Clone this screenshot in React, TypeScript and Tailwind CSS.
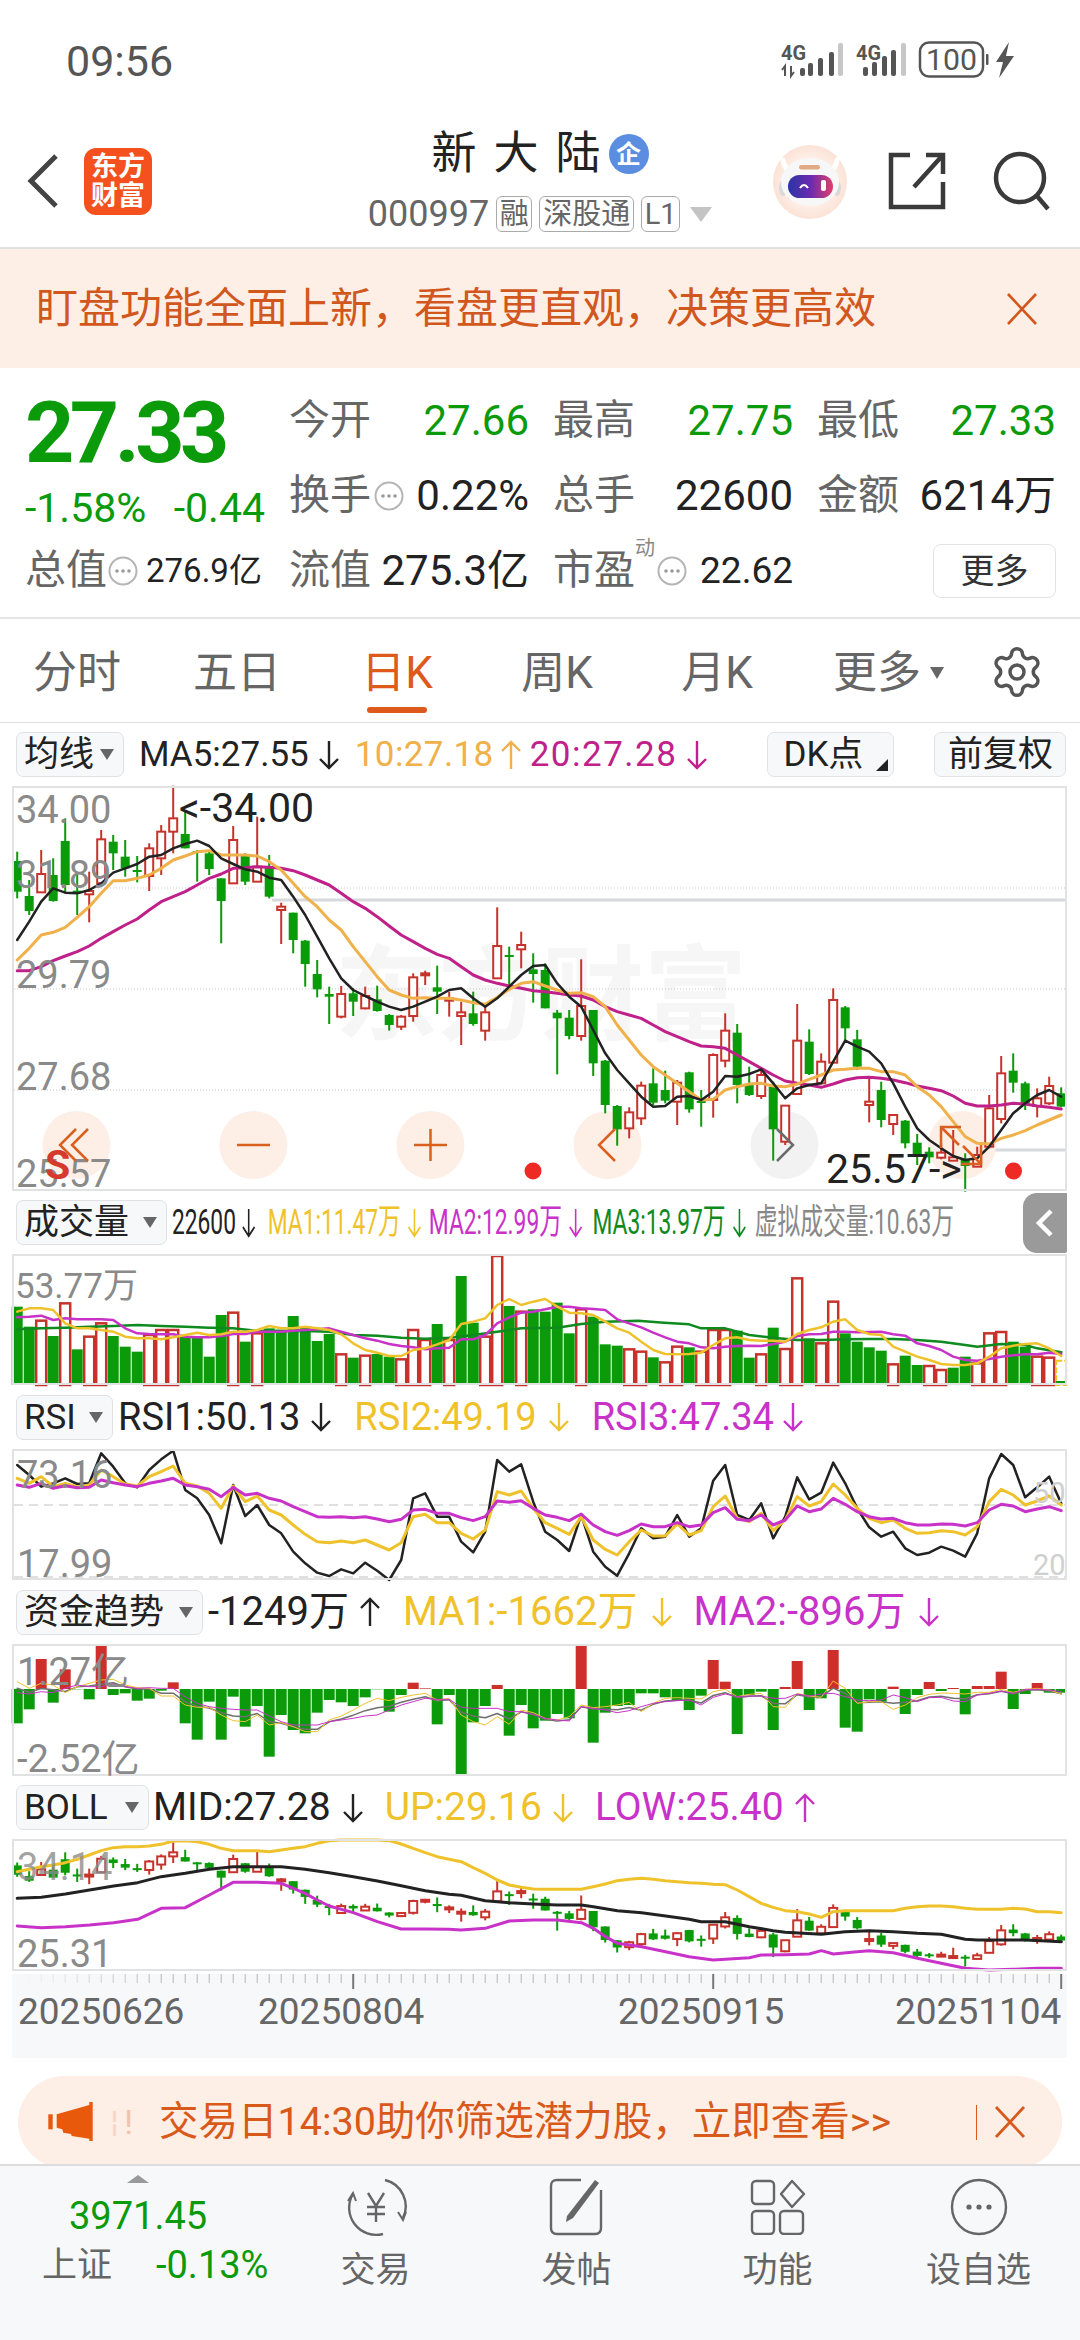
import React from "react";
import { Settings } from "lucide-react";

const GREEN = "#0a9a0a";
const RED = "#c8322c";
const G = 0;
const R = 1;

const cx = (i: number) => 5.2 + 12 * i;

// [colour, high, body top, body bottom, low], measured off the main chart
const candles: number[][] = [
    [G, 395, 423, 515, 535], [G, 480, 528, 573, 585], [R, 390, 462, 517, 517], [G, 415, 465, 543, 545],
    [G, 295, 363, 495, 520], [G, 455, 512, 520, 585], [R, 455, 513, 523, 607], [R, 330, 358, 490, 490],
    [G, 345, 365, 400, 450], [G, 360, 410, 445, 470], [G, 408, 450, 454, 487], [R, 370, 385, 468, 513],
    [R, 315, 335, 415, 465], [R, 197, 295, 335, 400], [G, 270, 342, 385, 385], [G, 390, 393, 397, 485],
    [G, 393, 400, 447, 465], [G, 475, 475, 543, 670], [R, 318, 360, 490, 490], [G, 400, 402, 485, 495],
    [R, 290, 440, 485, 485], [G, 405, 440, 530, 535], [R, 548, 560, 570, 672], [G, 578, 578, 660, 700],
    [G, 660, 662, 732, 800], [G, 720, 762, 808, 832], [G, 800, 822, 830, 912], [R, 798, 822, 890, 895],
    [G, 805, 820, 845, 888], [R, 800, 828, 865, 868], [G, 797, 838, 873, 875], [G, 882, 885, 915, 932],
    [R, 885, 890, 920, 930], [R, 760, 772, 888, 905], [R, 752, 760, 766, 795], [G, 737, 802, 815, 882],
    [R, 815, 835, 842, 890], [R, 845, 877, 888, 975], [G, 815, 880, 912, 917], [R, 850, 877, 932, 962],
    [R, 562, 678, 775, 775], [G, 680, 705, 710, 810], [R, 635, 675, 688, 745], [G, 700, 748, 762, 848],
    [G, 730, 750, 865, 865], [G, 870, 878, 895, 1063], [G, 870, 893, 948, 958], [R, 718, 858, 948, 962],
    [G, 870, 870, 1030, 1068], [G, 1020, 1022, 1155, 1180], [G, 1155, 1158, 1228, 1277], [R, 1162, 1177, 1225, 1255],
    [R, 1085, 1097, 1195, 1215], [G, 1045, 1090, 1148, 1155], [G, 1052, 1110, 1142, 1150], [R, 1080, 1088, 1145, 1215],
    [G, 1055, 1057, 1168, 1178], [G, 1110, 1143, 1148, 1220], [R, 1000, 1005, 1140, 1193], [R, 880, 932, 1022, 1042],
    [G, 912, 938, 1095, 1150], [G, 1040, 1092, 1125, 1128], [R, 1045, 1065, 1128, 1137], [G, 1085, 1100, 1228, 1322],
    [R, 1155, 1157, 1265, 1275], [R, 852, 962, 1122, 1125], [G, 928, 965, 1062, 1065], [R, 1000, 1025, 1090, 1092],
    [R, 805, 840, 1028, 1028], [G, 858, 862, 925, 965], [G, 930, 958, 1040, 1050], [R, 1072, 1145, 1155, 1207],
    [G, 1085, 1110, 1200, 1222], [R, 1185, 1185, 1212, 1245], [G, 1200, 1202, 1270, 1285], [G, 1242, 1268, 1310, 1335],
    [G, 1282, 1295, 1312, 1330], [R, 1270, 1298, 1313, 1318], [R, 1230, 1312, 1322, 1322], [G, 1300, 1318, 1338, 1415],
    [R, 1280, 1305, 1340, 1340], [R, 1125, 1165, 1280, 1285], [R, 1008, 1060, 1197, 1210], [G, 1000, 1052, 1088, 1118],
    [G, 1085, 1090, 1150, 1170], [R, 1105, 1135, 1158, 1192], [R, 1070, 1098, 1150, 1155], [G, 1102, 1120, 1160, 1162],
];

const ma5 = [660, 605, 545, 505, 518, 520, 510, 490, 458, 445, 432, 410, 405, 385, 372, 362, 378, 415, 432, 448, 455, 473, 480, 530, 585, 650, 715, 775, 810, 828, 845, 860, 870, 860, 845, 830, 810, 805, 835, 860, 835, 800, 765, 738,
    735, 790, 830, 860, 930, 1000, 1050, 1090, 1130, 1160, 1158, 1130, 1128, 1140, 1115, 1068, 1070, 1062, 1048, 1090, 1135, 1105, 1095, 1090, 1025, 962, 980, 995, 1030, 1090, 1160, 1225, 1260, 1285, 1308, 1320, 1315, 1280, 1230, 1180, 1150, 1125, 1110, 1130];
const ma10 = [720, 685, 645, 637, 622, 592, 560, 520, 482, 482, 475, 465, 445, 420, 408, 395, 392, 405, 405, 405, 408, 425, 450, 490, 530, 560, 600, 630, 680, 725, 770, 810, 825, 835, 833, 835, 835, 840, 848, 853, 832, 808, 790, 785,
    798, 810, 820, 818, 830, 860, 915, 960, 1005, 1040, 1065, 1090, 1115, 1140, 1138, 1110, 1100, 1092, 1090, 1098, 1100, 1092, 1078, 1065, 1050, 1048, 1045, 1045, 1055, 1055, 1065, 1100, 1125, 1160, 1205, 1250, 1270, 1272, 1255, 1245, 1232, 1215, 1200, 1185];
const ma20 = [752, 752, 740, 722, 708, 695, 678, 655, 635, 615, 597, 570, 545, 530, 515, 495, 475, 462, 445, 443, 440, 442, 445, 452, 465, 480, 495, 520, 545, 565, 590, 618, 645, 665, 685, 703, 715, 740, 765, 780, 790, 798, 805, 812,
    815, 820, 825, 828, 840, 860, 875, 885, 895, 915, 935, 950, 965, 978, 980, 985, 1005, 1025, 1045, 1065, 1083, 1090, 1095, 1102, 1092, 1080, 1073, 1072, 1075, 1080, 1088, 1098, 1105, 1112, 1128, 1150, 1158, 1158, 1155, 1150, 1152, 1158, 1162, 1167];

// negative means a red (hollow) bar
const volume = [320, 380, -362, 408, -310, 448, -410, -370, 408, 440, 455, -405, -390, -390, 410, 410, 470, 345, -338, 425, -400, 385, 395, 348, 380, 423, 402, -463, 473, -467, 462, 470, -478, -390, -420, 372, -420, 228, 368, -410, -168, 318, -335, 328,
    335, 308, 400, -328, 350, 433, 437, -448, -455, 472, -487, -440, 442, -455, -390, -390, 392, 473, -463, 383, -447, -235, 415, -430, -305, 400, 425, 442, 452, -493, 467, 495, -498, -510, 503, 470, -490, -400, -396, 425, 440, -470, -473, 543];
const volMa1 = [335, 325, 325, 330, 370, 385, 385, 390, 395, 410, 415, 415, 418, 412, 405, 398, 405, 403, 395, 395, 390, 378, 385, 385, 380, 385, 390, 403, 430, 450, 458, 468, 468, 450, 445, 433, 420, 372, 365, 355, 315, 297, 315, 305,
    297, 320, 338, 340, 345, 365, 385, 398, 425, 450, 462, 463, 462, 458, 435, 415, 412, 420, 422, 422, 425, 402, 390, 382, 365, 358, 390, 402, 405, 440, 455, 470, 480, 492, 495, 495, 490, 470, 445, 437, 432, 430, 445, 468];
const volMa2 = [352, 350, 347, 360, 355, 358, 358, 358, 360, 385, 400, 402, 403, 403, 410, 412, 412, 408, 402, 402, 395, 395, 395, 392, 390, 388, 385, 395, 405, 415, 422, 432, 438, 442, 448, 445, 443, 418, 418, 405, 370, 352, 338, 335,
    328, 320, 320, 325, 327, 330, 358, 370, 382, 398, 412, 425, 430, 442, 445, 440, 438, 437, 438, 432, 425, 408, 403, 402, 395, 395, 397, 396, 395, 403, 407, 430, 438, 450, 470, 480, 482, 477, 470, 466, 463, 463, 458, 462];
const volMa3L = [50, 388, 120, 385, 190, 383, 260, 380, 330, 378, 400, 375, 468, 378, 538, 380, 608, 383, 677, 385, 747, 393, 817, 392, 886, 393, 956, 395, 1026, 405, 1096, 407, 1165, 413, 1235, 416, 1304, 413, 1374, 405, 1444, 395, 1514, 385];
const volMa3R = [50, 383, 120, 372, 190, 365, 285, 362, 360, 368, 433, 373, 468, 385, 538, 385, 608, 405, 677, 413, 747, 420, 817, 420, 886, 418, 956, 417, 1026, 417, 1096, 420, 1165, 425, 1235, 435, 1270, 440, 1339, 432, 1409, 435, 1444, 445, 1514, 457];

const rsi1 = [795, 825, 860, 850, 835, 852, 850, 760, 800, 850, 862, 810, 778, 752, 870, 895, 945, 1030, 855, 948, 915, 975, 1000, 1055, 1090, 1118, 1128, 1108, 1120, 1088, 1112, 1140, 1080, 895, 880, 950, 950, 1025, 1057, 995, 780, 815, 793, 905,
    995, 1020, 1053, 945, 1055, 1100, 1127, 1060, 985, 1015, 1010, 945, 1010, 985, 842, 795, 945, 960, 910, 1015, 950, 832, 898, 878, 788, 850, 925, 982, 1010, 995, 1045, 1065, 1058, 1040, 1052, 1070, 1000, 835, 762, 795, 892, 862, 830, 910];
const rsi2 = [835, 850, 830, 860, 850, 860, 855, 810, 830, 852, 858, 830, 815, 798, 850, 858, 880, 925, 858, 905, 888, 930, 945, 975, 1003, 1025, 1028, 1023, 1028, 1020, 1035, 1050, 1028, 950, 943, 968, 968, 1000, 1017, 990, 875, 885, 873, 925,
    968, 985, 1003, 950, 1020, 1048, 1065, 1025, 990, 1008, 1008, 972, 1005, 992, 920, 888, 955, 965, 940, 992, 960, 890, 918, 905, 852, 885, 925, 955, 968, 960, 985, 1000, 998, 992, 995, 1005, 980, 905, 868, 885, 915, 903, 888, 915];
const rsi3 = [855, 862, 850, 865, 857, 863, 862, 840, 848, 855, 860, 850, 843, 835, 855, 860, 868, 890, 862, 885, 880, 895, 903, 920, 935, 950, 952, 950, 953, 950, 957, 965, 958, 930, 928, 940, 940, 953, 962, 950, 903, 907, 902, 925,
    945, 952, 962, 942, 975, 995, 1006, 992, 972, 980, 980, 968, 980, 975, 938, 923, 958, 962, 945, 975, 960, 918, 935, 927, 895, 913, 935, 950, 957, 955, 968, 975, 975, 972, 973, 978, 968, 930, 913, 918, 935, 927, 920, 932];

// negative means a red bar above the zero line
const flow = [400, 358, -207, 338, -238, 298, 328, -165, 315, 310, 332, 326, 302, -277, 400, 449, 335, 449, 320, 410, 348, 500, 375, 420, 430, 368, 330, 337, 348, 322, 298, 365, 315, -278, -295, 403, 315, 558, 397, 348, -285, 437, 345, 415,
    392, 372, 385, -168, 458, 368, 348, 345, 310, 310, 322, 332, 360, 317, -210, -275, 432, 315, 305, 420, -291, -213, 360, 325, -180, 413, 425, 328, 335, -290, 372, 315, -276, 303, -294, 373, -288, -288, -245, 357, 312, -279, 308, 308];
const flowMa1 = [275, 295, 280, 285, 308, 290, 280, 270, 268, 285, 293, 295, 318, 318, 345, 352, 352, 375, 392, 395, 375, 405, 398, 410, 425, 425, 390, 378, 360, 340, 325, 332, 322, 315, 310, 330, 325, 375, 395, 405, 380, 403, 360, 368,
    385, 390, 380, 345, 353, 350, 345, 337, 365, 340, 325, 323, 325, 327, 305, 298, 320, 313, 310, 350, 352, 310, 318, 322, 273, 295, 340, 335, 335, 358, 345, 323, 313, 309, 310, 312, 307, 307, 298, 307, 298, 295, 300, 312];
const flowMa2 = [308, 312, 305, 308, 295, 285, 290, 290, 282, 290, 295, 293, 295, 295, 320, 340, 350, 355, 358, 360, 360, 378, 395, 405, 405, 405, 395, 390, 385, 378, 375, 360, 345, 335, 325, 328, 328, 352, 355, 355, 355, 365, 365, 373,
    385, 390, 393, 350, 355, 360, 368, 362, 350, 340, 335, 332, 330, 345, 322, 312, 320, 318, 318, 325, 325, 312, 318, 312, 310, 320, 330, 332, 330, 315, 323, 335, 323, 322, 333, 335, 315, 310, 303, 310, 298, 298, 300, 305];
const flowMid = flowMa1.map((y, i) => (y + flowMa2[i]) / 2 + 3);

const bollUp = [845, 838, 830, 825, 818, 808, 795, 782, 773, 770, 770, 768, 763, 753, 752, 755, 763, 775, 782, 782, 782, 785, 780, 775, 770, 760, 752, 750, 750, 750, 750, 752, 762, 775, 788, 800, 808, 815, 833, 850, 870, 885, 892, 897,
    898, 898, 898, 898, 890, 882, 872, 868, 865, 868, 872, 875, 878, 880, 883, 884, 900, 920, 940, 952, 962, 965, 972, 982, 965, 962, 962, 962, 962, 962, 955, 950, 948, 948, 950, 955, 958, 958, 958, 955, 957, 965, 965, 968];
const bollMidL = [50, 925, 120, 922, 190, 912, 260, 900, 330, 888, 400, 878, 468, 860, 538, 850, 608, 838, 677, 830, 747, 830, 817, 830, 886, 838, 956, 848, 1026, 860, 1096, 873, 1165, 887, 1235, 902, 1304, 913, 1339, 916, 1409, 932, 1479, 938, 1549, 942];
const bollMidR = [50, 945, 120, 945, 155, 950, 225, 962, 295, 968, 365, 978, 433, 988, 468, 995, 538, 995, 608, 1010, 677, 1022, 712, 1027, 817, 1033, 886, 1025, 956, 1022, 1026, 1025, 1096, 1030, 1165, 1033, 1235, 1048, 1270, 1050, 1339, 1050, 1409, 1050, 1514, 1055];
const bollLowL = [50, 1008, 120, 1013, 190, 1010, 260, 1005, 330, 998, 400, 988, 468, 955, 538, 953, 608, 915, 677, 877, 747, 877, 817, 880, 852, 895, 886, 910, 921, 930, 956, 948, 1026, 968, 1096, 995, 1165, 1017, 1235, 1017, 1304, 1018, 1339, 1020, 1409, 1015, 1479, 993, 1549, 990];
const bollLowR = [50, 990, 120, 998, 155, 1015, 190, 1040, 225, 1060, 295, 1070, 365, 1085, 433, 1100, 503, 1110, 538, 1108, 608, 1103, 642, 1095, 712, 1094, 782, 1092, 817, 1082, 852, 1092, 921, 1085, 956, 1082, 1026, 1088, 1096, 1105, 1165, 1120, 1235, 1135, 1304, 1140, 1374, 1138, 1444, 1135, 1514, 1135];

const dense = (ys: number[], off: number) => ys.map((y, i) => `${cx(i)},${y / 3 - off}`).join(" ");
const sparse = (left: number[], right: number[], off: number) => {
    const out: string[] = [];
    for (let i = 0; i < left.length; i += 2) out.push(`${left[i] / 2.904 - 12},${left[i + 1] / 3 - off}`);
    for (let i = 0; i < right.length; i += 2) out.push(`${528 + right[i] / 2.904},${right[i + 1] / 3 - off}`);
    return out.join(" ");
};

const Line: React.FC<{ points: string; color: string; width?: number }> = ({ points, color, width = 2 }) => (
    <polyline points={points} fill="none" stroke={color} strokeWidth={width} strokeLinejoin="round" strokeLinecap="round" />
);

const Frame: React.FC<{ h: number }> = ({ h }) => (
    <rect x="1" y="1" width="1053" height={h - 2} fill="none" stroke="#e1e2e4" strokeWidth="2" />
);

const AxisText: React.FC<{ x?: number; y: number; size?: number; children: React.ReactNode; color?: string }> = ({ x = 4, y, size = 38, children, color = "#8a8a8a" }) => (
    <text x={x} y={y} fontSize={size} fill={color}>{children}</text>
);

const Candles: React.FC<{ map: (z: number) => number; w: number; sw: number; minH?: number }> = ({ map, w, sw, minH = 2 }) => (
    <>
        {candles.map((c, i) => {
            const x = cx(i);
            const color = c[0] === R ? RED : GREEN;
            const top = map(c[2]);
            const h = Math.max(map(c[3]) - top, minH);
            return (
                <g key={i}>
                    <line x1={x} x2={x} y1={map(c[1])} y2={map(c[4])} stroke={color} strokeWidth={sw} />
                    {c[0] === R
                        ? <rect x={x - w / 2} y={top} width={w} height={h} fill="#fff" stroke={color} strokeWidth={sw} />
                        : <rect x={x - w / 2 - 0.5} y={top} width={w + 1} height={h} fill={color} />}
                </g>
            );
        })}
    </>
);

const MainChart: React.FC = () => {
    const y = (z: number) => z / 3 - 66;
    const circles = [64.4, 241.4, 418.4, 595.5, 772.5, 950];
    return (
        <div className="h-[405px] w-[1055px] ml-[12px] shrink-0">
            <svg width="1055" height="405" className="block overflow-visible">
                <text x="323" y="246" fontSize="103" fontWeight="700" fill="#f6f6f6">东方财富</text>
                {[102, 203, 304].map((g) => (
                    <line key={g} x1="2" x2="1053" y1={g} y2={g} stroke="#c9c9c9" strokeWidth="1" strokeDasharray="1 2" />
                ))}
                <line x1="260" x2="1054" y1="114" y2="114" stroke="#d7d9dc" strokeWidth="3" />
                <line x1="982" x2="1054" y1="364" y2="364" stroke="#d7d9dc" strokeWidth="3" />
                {circles.map((c, i) => (
                    <circle key={c} cx={c} cy="359" r="34" fill={i === 4 ? "#f2f2f2" : "#fdeee6"} />
                ))}
                <Candles map={y} w={8} sw={2} />
                <Line points={dense(ma20, 66)} color="#c0208a" width={3} />
                <Line points={dense(ma10, 66)} color="#f0b04a" width={3} />
                <Line points={dense(ma5, 66)} color="#222222" width={2.5} />
                <Frame h={405} />
                <AxisText y={37}>34.00</AxisText>
                <AxisText y={102}>31.89</AxisText>
                <AxisText y={202}>29.79</AxisText>
                <AxisText y={304}>27.68</AxisText>
                <AxisText y={401}>25.57</AxisText>
                <text x="167" y="36" fontSize="41" fill="#222">&lt;-34.00</text>
                <text x="814" y="397" fontSize="41" fill="#222">25.57-&gt;</text>
                <text x="33" y="393" fontSize="41" fontWeight="700" fill="#d43b2c">S</text>
                <g fill="none" stroke="#d9601f" strokeWidth="2.5">
                    <path d="M75 343 L59 359 L75 375 M87 343 L71 359 L87 375" transform="translate(-11 0)" />
                    <path d="M225 359 H258" />
                    <path d="M402 359 H435 M418.5 343 V375" />
                    <path d="M603 343 L587 359 L603 375" />
                    <path d="M930 362 V341 H950 M930 341 L948 359 M970 359 V378 H950 M970 378 L952 360" transform="translate(-1 0)" />
                </g>
                <path d="M765 343 L781 359 L765 375" fill="none" stroke="#6b6b6b" strokeWidth="2.5" />
                <circle cx="521" cy="385" r="8.5" fill="#ee2a24" />
                <circle cx="1001.5" cy="385" r="8.5" fill="#ee2a24" />
            </svg>
        </div>
    );
};

const VolumeChart: React.FC = () => {
    const y = (z: number) => z / 3 - 54;
    return (
        <div className="h-[131px] w-[1055px] ml-[12px] shrink-0">
            <svg width="1055" height="131" className="block overflow-visible">
                {volume.map((v, i) => {
                    const x = cx(i);
                    const top = y(Math.abs(v));
                    if (i === 87) {
                        return (
                            <g key={i}>
                                <rect x={x - 5} y={y(482)} width={10} height={131 - y(482)} fill="#fff" stroke="#efc22c" strokeWidth="2" strokeDasharray="6 2" />
                                <rect x={x - 5.5} y={top} width={11} height={131 - top} fill={GREEN} />
                            </g>
                        );
                    }
                    return v < 0
                        ? <rect key={i} x={x - 5} y={top} width={10} height={131 - top} fill="#fff" stroke={RED} strokeWidth="2.5" />
                        : <rect key={i} x={x - 5.5} y={top} width={11} height={131 - top} fill={GREEN} />;
                })}
                <Line points={sparse(volMa3L, volMa3R, 54)} color="#0f8a1e" width={2.5} />
                <Line points={dense(volMa2, 54)} color="#c832c8" width={2.5} />
                <Line points={dense(volMa1, 54)} color="#efc22c" width={2.5} />
                <Frame h={131} />
                <AxisText x={3} y={44} size={35}>53.77万</AxisText>
            </svg>
        </div>
    );
};

const RsiChart: React.FC = () => (
    <div className="h-[131px] w-[1055px] ml-[12px] shrink-0">
        <svg width="1055" height="131" className="block overflow-visible">
            {[56, 128].map((g) => (
                <line key={g} x1="2" x2="1053" y1={g} y2={g} stroke="#d6d6d6" strokeWidth="1.5" strokeDasharray="9 6" />
            ))}
            <Line points={dense(rsi1, 249)} color="#222222" width={2.5} />
            <Line points={dense(rsi2, 249)} color="#efc22c" width={3} />
            <Line points={dense(rsi3, 249)} color="#c832c8" width={3} />
            <Frame h={131} />
            <AxisText x={5} y={39}>73.16</AxisText>
            <AxisText x={5} y={128}>17.99</AxisText>
            <AxisText x={1021} y={54} size={29} color="#cfcfcf">50</AxisText>
            <AxisText x={1021} y={126} size={29} color="#cfcfcf">20</AxisText>
        </svg>
    </div>
);

const FlowChart: React.FC = () => {
    const y = (z: number) => z / 3 - 54;
    const zero = y(297);
    return (
        <div className="h-[132px] w-[1055px] ml-[12px] shrink-0">
            <svg width="1055" height="132" className="block overflow-visible">
                {flow.map((v, i) => {
                    const x = cx(i) - 5.5;
                    const end = y(Math.abs(v));
                    return v < 0
                        ? <rect key={i} x={x} y={end} width={11} height={zero - end} fill="#cf2f2b" />
                        : <rect key={i} x={x} y={zero} width={11} height={end - zero} fill={GREEN} />;
                })}
                <Line points={dense(flowMid, 54)} color="#6f6f6f" width={1.5} />
                <Line points={dense(flowMa1, 54)} color="#efc22c" width={1} />
                <Line points={dense(flowMa2, 54)} color="#c832c8" width={1} />
                <Frame h={132} />
                <AxisText x={5} y={41}>1.27亿</AxisText>
                <AxisText x={5} y={128}>-2.52亿</AxisText>
            </svg>
        </div>
    );
};

const BollChart: React.FC = () => {
    const y = (z: number) => (757 + 0.306 * (z - 197)) / 3 - 249;
    return (
        <div className="h-[132px] w-[1055px] ml-[12px] shrink-0">
            <svg width="1055" height="132" className="block overflow-visible">
                <Candles map={y} w={8} sw={2} minH={2} />
                <Line points={dense(bollUp, 249)} color="#efc22c" width={3} />
                <Line points={sparse(bollMidL, bollMidR, 249)} color="#222222" width={3} />
                <Line points={sparse(bollLowL, bollLowR, 249)} color="#c832c8" width={3} />
                <Frame h={132} />
                <AxisText x={5} y={41} color="#8a8a8acc">34.14</AxisText>
                <AxisText x={5} y={128}>25.31</AxisText>
            </svg>
        </div>
    );
};

const TimeAxis: React.FC = () => (
    <div className="mt-[3px] h-[84px] w-[1055px] ml-[12px] shrink-0 bg-[#f7f8fa] flex flex-col">
        <svg width="1055" height="15" className="block shrink-0">
            {candles.map((_, i) => {
                const major = i === 28 || i === 58 || i === 87;
                return (
                    <line key={i} x1={cx(i)} x2={cx(i)} y1="0" y2={major ? 15 : 9} stroke={major ? "#777" : "#b5b5b5"} strokeWidth={major ? 2 : 1} opacity={i < 14 ? 0.08 * i : 1} />
                );
            })}
        </svg>
        <div className="relative h-[40px] mt-[3px] text-[37px] leading-[40px] text-[#666]">
            <span className="absolute left-[6px]">20250626</span>
            <span className="absolute left-[246px]">20250804</span>
            <span className="absolute left-[606px]">20250915</span>
            <span className="absolute left-[883px]">20251104</span>
        </div>
    </div>
);

const Arrow: React.FC<{ up?: boolean; className?: string }> = ({ up, className }) => (
    <svg width="22" height="30" viewBox="0 0 22 30" className={`shrink-0 ${className ?? ""}`} fill="none" stroke="currentColor" strokeWidth="2.4">
        {up
            ? <path d="M11 29 V2 M2 11 L11 2 L20 11" />
            : <path d="M11 1 V28 M2 19 L11 28 L20 19" />}
    </svg>
);

const Tri: React.FC = () => (
    <span className="w-0 h-0 border-x-[7px] border-x-transparent border-t-[11px] border-t-[#666] shrink-0" />
);

const Selector: React.FC<{ label: string; className: string }> = ({ label, className }) => (
    <div className={`h-[45px] ml-[16px] shrink-0 flex items-center justify-between pl-[7px] pr-[9px] rounded-[7px] border border-[#dfe1e4] bg-[#f7f8fa] text-[35px] leading-none text-[#222] ${className}`}>
        <span>{label}</span>
        <Tri />
    </div>
);

const Tag: React.FC<{ children: React.ReactNode; className?: string }> = ({ children, className }) => (
    <span className={`h-[36px] flex items-center justify-center rounded-[6px] border border-[#aaa] text-[29px] leading-none text-[#666] ${className ?? ""}`}>{children}</span>
);

const Dots: React.FC<{ className?: string }> = ({ className }) => (
    <svg width="30" height="30" viewBox="0 0 30 30" className={`shrink-0 ${className ?? ""}`}>
        <circle cx="15" cy="15" r="13.5" fill="none" stroke="#b5b5b5" strokeWidth="2" />
        <circle cx="9" cy="15" r="1.8" fill="#999" />
        <circle cx="15" cy="15" r="1.8" fill="#999" />
        <circle cx="21" cy="15" r="1.8" fill="#999" />
    </svg>
);

const StatusIcons: React.FC = () => (
    <svg width="240" height="40" viewBox="0 0 240 40" className="block">
        <g fill="#555">
            <text x="3" y="20" fontSize="21" fontWeight="700" textLength="25" lengthAdjust="spacingAndGlyphs">4G</text>
            <path d="M7 36 V26 L4 30 M13 26 V36 L16 32" stroke="#555" strokeWidth="2" fill="none" />
            <rect x="22" y="28" width="5" height="8" rx="2" />
            <rect x="30" y="23" width="5" height="13" rx="2" />
            <rect x="40" y="18" width="5" height="18" rx="2" />
            <rect x="51" y="12" width="5" height="24" rx="2" />
            <rect x="60" y="3" width="5" height="33" rx="2" fill="#c7c7c7" />
            <text x="78" y="20" fontSize="21" fontWeight="700" textLength="25" lengthAdjust="spacingAndGlyphs">4G</text>
            <rect x="85" y="27" width="5" height="9" rx="2" />
            <rect x="94" y="22" width="5" height="14" rx="2" />
            <rect x="104" y="16" width="5" height="20" rx="2" />
            <rect x="113" y="10" width="5" height="26" rx="2" />
            <rect x="123" y="3" width="5" height="33" rx="2" fill="#c7c7c7" />
        </g>
        <rect x="142" y="2.5" width="63" height="34" rx="9" fill="none" stroke="#555" strokeWidth="2.5" />
        <text x="148" y="30" fontSize="29" fill="#555" textLength="51" lengthAdjust="spacingAndGlyphs">100</text>
        <rect x="208" y="14" width="2.5" height="11" rx="1" fill="#555" />
        <path d="M231 2 L218 22 H225 L221 38 L236 16 H228 Z" fill="#555" />
    </svg>
);

const RobotAvatar: React.FC = () => (
    <svg width="76" height="76" viewBox="0 0 76 76" className="block">
        <defs>
            <linearGradient id="visor" x1="0" x2="1" y1="0" y2="0">
                <stop offset="0" stopColor="#2a35a5" />
                <stop offset="0.5" stopColor="#6a2bb0" />
                <stop offset="1" stopColor="#e0406a" />
            </linearGradient>
            <radialGradient id="halo">
                <stop offset="0.5" stopColor="#fff4ee" />
                <stop offset="1" stopColor="#fbe2d6" />
            </radialGradient>
        </defs>
        <circle cx="38" cy="38" r="37" fill="url(#halo)" />
        <path d="M11 16 Q12 26 21 27 M65 16 Q64 26 55 27" stroke="#fff" strokeWidth="5" fill="none" strokeLinecap="round" />
        <ellipse cx="11" cy="44" rx="4" ry="8" fill="#d9d9dc" />
        <ellipse cx="65" cy="44" rx="4" ry="8" fill="#d9d9dc" />
        <ellipse cx="38" cy="38" rx="29" ry="24" fill="#f7f7f8" />
        <rect x="27" y="21" width="21" height="4.5" rx="2.2" fill="#e2a987" />
        <rect x="16" y="31" width="45" height="23" rx="11.5" fill="url(#visor)" />
        <path d="M28 44 Q32 38 36 44" stroke="#fff" strokeWidth="2" fill="none" />
        <rect x="49" y="36" width="5" height="11" rx="2" fill="#fff" />
    </svg>
);

const Stat: React.FC<{ label: string; value: string; dots?: boolean; className?: string }> = ({ label, value, dots, className }) => (
    <div className={`flex items-center justify-between whitespace-nowrap ${className ?? ""}`}>
        <div className="flex items-center">
            <span className="text-[41px] leading-none text-[#666]">{label}</span>
            {dots && <Dots className="ml-[3px]" />}
        </div>
        <span className="text-[42px] leading-none text-[#222]">{value}</span>
    </div>
);

const Quote: React.FC = () => (
    <div className="h-[251px] shrink-0 flex pt-[15px] border-b-2 border-[#e4e4e4]">
        <div className="w-[289px] shrink-0 pl-[25px] flex flex-col">
            <div className="h-[100px] flex items-center text-[86px] font-bold leading-none tracking-[-4.5px] text-[#0a9a0a]">27.33</div>
            <div className="h-[50px] flex items-center justify-between pr-[24px] text-[41px] leading-none text-[#0a9a0a]">
                <span>-1.58%</span>
                <span>-0.44</span>
            </div>
            <div className="h-[75px] flex items-center pr-[24px] whitespace-nowrap">
                <span className="text-[41px] leading-none text-[#666]">总值</span>
                <Dots className="ml-[1px]" />
                <span className="ml-[8px] text-[33px] leading-none text-[#222]">276.9亿</span>
            </div>
        </div>
        <div className="grid grid-cols-[264px_264px_239px] grid-rows-[75px_75px_75px]">
            <div className="flex items-center justify-between pr-[24px] whitespace-nowrap">
                <span className="text-[41px] leading-none text-[#666]">今开</span>
                <span className="text-[42px] leading-none text-[#0a9a0a]">27.66</span>
            </div>
            <div className="flex items-center justify-between pr-[24px] whitespace-nowrap">
                <span className="text-[41px] leading-none text-[#666]">最高</span>
                <span className="text-[42px] leading-none text-[#0a9a0a]">27.75</span>
            </div>
            <div className="flex items-center justify-between whitespace-nowrap">
                <span className="text-[41px] leading-none text-[#666]">最低</span>
                <span className="text-[42px] leading-none text-[#0a9a0a]">27.33</span>
            </div>
            <Stat label="换手" value="0.22%" dots className="pr-[24px]" />
            <Stat label="总手" value="22600" className="pr-[24px]" />
            <Stat label="金额" value="6214万" />
            <Stat label="流值" value="275.3亿" className="pr-[24px]" />
            <div className="flex items-center pr-[24px] whitespace-nowrap">
                <span className="text-[41px] leading-none text-[#666] shrink-0">市盈</span>
                <span className="self-start mt-[5px] text-[20px] leading-none text-[#888] shrink-0">动</span>
                <Dots className="ml-[2px]" />
                <span className="ml-auto text-[37px] leading-none text-[#222]">22.62</span>
            </div>
            <div className="flex items-center justify-end">
                <div className="w-[123px] h-[54px] flex items-center justify-center rounded-[8px] border border-[#e3e3e3] text-[34px] leading-none text-[#333]">更多</div>
            </div>
        </div>
    </div>
);

const Tabs: React.FC = () => (
    <div className="h-[104px] shrink-0 flex items-start pt-[32px] border-b border-[#dedede]">
        <div className="flex -ml-[3px]">
            {["分时", "五日", "日K", "周K", "月K"].map((t) => (
                <div key={t} className="w-[160px] flex flex-col items-center">
                    <span className={t === "日K" ? "text-[44px] leading-none text-[#dd5a1c]" : "text-[44px] leading-none text-[#666]"}>{t}</span>
                    <span className={t === "日K" ? "mt-[12px] w-[60px] h-[6px] rounded-full bg-[#dd5a1c]" : "mt-[12px] h-[6px]"} />
                </div>
            ))}
        </div>
        <div className="w-[160px] pl-[36px] flex items-center">
            <span className="text-[44px] leading-none text-[#666]">更多</span>
            <span className="ml-[9px] w-0 h-0 border-x-[7px] border-x-transparent border-t-[12px] border-t-[#666]" />
        </div>
        <Settings className="ml-[32px] -mt-[7px] text-[#555]" size={56} strokeWidth={1.5} />
    </div>
);

const NavItem: React.FC<{ label: string; children: React.ReactNode }> = ({ label, children }) => (
    <div className="w-[201px] flex flex-col items-center pt-[11px]">
        <div className="h-[60px] flex items-center justify-center">{children}</div>
        <span className="mt-[16px] text-[35px] leading-none text-[#666]">{label}</span>
    </div>
);

const Footer: React.FC = () => (
    <div className="flex-1 flex bg-[#f7f8fa] border-t-2 border-[#dcdcdc]">
        <div className="w-[275px] shrink-0 flex flex-col pl-[42px] pt-[9px]">
            <span className="ml-[85px] w-0 h-0 border-x-[11px] border-x-transparent border-b-[8px] border-b-[#999]" />
            <span className="ml-[27px] mt-[14px] text-[38px] leading-none text-[#0a9a0a]">3971.45</span>
            <div className="mt-[11px] flex items-center">
                <span className="text-[35px] leading-none text-[#666]">上证</span>
                <span className="ml-[44px] text-[38px] leading-none text-[#0a9a0a]">-0.13%</span>
            </div>
        </div>
        <NavItem label="交易">
            <svg width="66" height="60" viewBox="0 0 66 60" fill="none" stroke="#666" strokeWidth="2.4">
                <path d="M42 3 A27 27 0 0 1 60 41 M40 57 A27 27 0 0 1 10 17" />
                <path d="M5 24 L10 16 L13 24 M55 35 L60 43 L63 35" strokeWidth="2" />
                <path d="M25 16 L33 29 L41 16 M33 29 V45 M24 30 H42 M24 37 H42" />
            </svg>
        </NavItem>
        <NavItem label="发帖">
            <svg width="56" height="58" viewBox="0 0 56 58" fill="none" stroke="#666" strokeWidth="2.4">
                <path d="M32 2 H8 Q2 2 2 8 V50 Q2 56 8 56 H46 Q52 56 52 50 V12" />
                <path d="M18 38 L46 2 L50 5 L24 40 L17 44 Z" fill="#666" stroke="none" />
            </svg>
        </NavItem>
        <NavItem label="功能">
            <svg width="56" height="56" viewBox="0 0 56 56" fill="none" stroke="#666" strokeWidth="2.4">
                <rect x="2" y="2" width="22" height="23" rx="4" />
                <path d="M42 2 L54 15 L42 28 L31 15 Z" strokeLinejoin="round" />
                <rect x="2" y="32" width="22" height="23" rx="4" />
                <rect x="30" y="32" width="23" height="23" rx="4" />
            </svg>
        </NavItem>
        <NavItem label="设自选">
            <svg width="58" height="58" viewBox="0 0 58 58" fill="none" stroke="#666" strokeWidth="2.4">
                <circle cx="29" cy="29" r="27" />
                <circle cx="19" cy="29" r="2.6" fill="#666" stroke="none" />
                <circle cx="29" cy="29" r="2.6" fill="#666" stroke="none" />
                <circle cx="39" cy="29" r="2.6" fill="#666" stroke="none" />
            </svg>
        </NavItem>
    </div>
);

const App: React.FC = () => {
    return (
        <div className="w-[1080px] h-[2340px] flex flex-col overflow-hidden bg-white font-['Roboto','Noto_Sans_CJK_SC',sans-serif]">
            {/* status bar */}
            <div className="h-[100px] shrink-0 flex items-start">
                <span className="ml-[66px] mt-[36px] text-[43px] leading-[50px] text-[#555]">09:56</span>
                <div className="ml-auto mr-[62px] mt-[40px]"><StatusIcons /></div>
            </div>

            {/* stock header */}
            <div className="h-[149px] shrink-0 flex items-start border-b-2 border-[#e3e0e0]">
                <svg width="36" height="56" viewBox="0 0 36 56" className="ml-[25px] mt-[53px] shrink-0" fill="none" stroke="#444" strokeWidth="5">
                    <path d="M31 3 L6 28 L31 53" />
                </svg>
                <div className="ml-[23px] mt-[48px] w-[68px] h-[67px] shrink-0 rounded-[12px] bg-[#f4511e] flex flex-col items-center justify-center text-[27px] font-bold leading-[29px] text-white">
                    <span>东方</span>
                    <span>财富</span>
                </div>
                <div className="w-[610px] ml-[83px] mt-[30px] flex flex-col items-center">
                    <div className="flex items-center">
                        <span className="text-[45px] leading-[48px] tracking-[17px] text-[#222]">新大陆</span>
                        <span className="-ml-[9px] w-[40px] h-[40px] rounded-full bg-[#5b8de0] flex items-center justify-center text-[25px] font-bold leading-none text-white">企</span>
                    </div>
                    <div className="mt-[18px] flex items-center gap-[7px]">
                        <span className="text-[36px] leading-none text-[#666]">000997</span>
                        <Tag className="w-[36px]">融</Tag>
                        <Tag className="w-[95px]">深股通</Tag>
                        <Tag className="w-[39px]">L1</Tag>
                        <span className="ml-[3px] w-0 h-0 border-x-[11px] border-x-transparent border-t-[15px] border-t-[#c4c4c4]" />
                    </div>
                </div>
                <div className="mt-[44px] -ml-[73px] shrink-0"><RobotAvatar /></div>
                <svg width="58" height="58" viewBox="0 0 58 58" className="ml-[40px] mt-[52px] shrink-0" fill="none" stroke="#3a3a3a" strokeWidth="4.5">
                    <path d="M22 3 H3 V55 H55 V30" />
                    <path d="M26 35 L54 4 M38 3 H55 V22" />
                </svg>
                <svg width="58" height="60" viewBox="0 0 58 60" className="ml-[47px] mt-[51px] shrink-0" fill="none" stroke="#3a3a3a" strokeWidth="4.5">
                    <circle cx="27" cy="27" r="24" />
                    <path d="M44 45 L55 58" />
                </svg>
            </div>

            {/* notice */}
            <div className="h-[119px] shrink-0 flex items-center bg-[#fdeee6] pl-[36px]">
                <span className="text-[42px] leading-none text-[#d2571d] whitespace-nowrap">盯盘功能全面上新，看盘更直观，决策更高效</span>
                <svg width="32" height="32" viewBox="0 0 32 32" className="ml-[130px] shrink-0" fill="none" stroke="#d2571d" strokeWidth="2.6">
                    <path d="M2 1 L30 31 M30 1 L2 31" />
                </svg>
            </div>

            <Quote />
            <Tabs />

            {/* main chart */}
            <div className="h-[63px] shrink-0 flex items-center text-[35px] leading-none">
                <Selector label="均线" className="w-[108px]" />
                <span className="ml-[15px] text-[#222]">MA5:27.55</span>
                <Arrow className="ml-[9px] text-[#222]" />
                <span className="ml-[15px] tracking-[.4px] text-[#f0b04a]">10:27.18</span>
                <Arrow up className="ml-[6px] text-[#f0b04a]" />
                <span className="ml-[8px] tracking-[1.5px] text-[#c0208a]">20:27.28</span>
                <Arrow className="ml-[9px] text-[#c0208a]" />
                <div className="ml-[59px] w-[127px] h-[45px] relative shrink-0 flex items-center pl-[15px] rounded-[7px] border border-[#e1e3e6] bg-[#f7f8fa] text-[35px] text-[#222]">
                    DK点
                    <span className="absolute right-[5px] bottom-[5px] w-0 h-0 border-l-[12px] border-l-transparent border-b-[12px] border-b-[#222]" />
                </div>
                <div className="ml-[40px] w-[132px] h-[45px] shrink-0 flex items-center justify-center rounded-[7px] border border-[#e1e3e6] bg-[#f7f8fa] text-[35px] text-[#222]">前复权</div>
            </div>
            <MainChart />

            {/* volume */}
            <div className="h-[63px] shrink-0 flex items-center relative text-[35px] leading-none">
                <Selector label="成交量" className="w-[151px]" />
                <div className="ml-[5px] origin-left scale-x-[.65] shrink-0 flex items-center whitespace-nowrap">
                    <span className="text-[#222]">22600</span>
                    <Arrow className="ml-[9px] text-[#222]" />
                    <span className="ml-[18px] text-[#efc22c]">MA1:11.47万</span>
                    <Arrow className="ml-[10px] text-[#efc22c]" />
                    <span className="ml-[11px] text-[#c832c8]">MA2:12.99万</span>
                    <Arrow className="ml-[10px] text-[#c832c8]" />
                    <span className="ml-[15px] text-[#0f8a1e]">MA3:13.97万</span>
                    <Arrow className="ml-[10px] text-[#0f8a1e]" />
                    <span className="ml-[13px] text-[#888]">虚拟成交量:10.63万</span>
                </div>
                <div className="absolute left-[1023px] top-[2px] w-[44px] h-[60px] rounded-l-[14px] rounded-br-[2px] bg-[#9a9a9a] flex items-center justify-center">
                    <svg width="20" height="30" viewBox="0 0 20 30" fill="none" stroke="#fff" strokeWidth="4.5">
                        <path d="M16 3 L4 15 L16 27" />
                    </svg>
                </div>
            </div>
            <VolumeChart />

            {/* rsi */}
            <div className="h-[64px] shrink-0 flex items-center text-[38px] leading-none">
                <Selector label="RSI" className="w-[97px]" />
                <span className="ml-[5px] text-[#222]">RSI1:50.13</span>
                <Arrow className="ml-[10px] text-[#222]" />
                <span className="ml-[22px] text-[#efc22c]">RSI2:49.19</span>
                <Arrow className="ml-[11px] text-[#efc22c]" />
                <span className="ml-[22px] text-[#c832c8]">RSI3:47.34</span>
                <Arrow className="ml-[8px] text-[#c832c8]" />
            </div>
            <RsiChart />

            {/* money flow */}
            <div className="h-[64px] shrink-0 flex items-center text-[40px] leading-none">
                <Selector label="资金趋势" className="w-[187px]" />
                <span className="ml-[5px] text-[#222]">-1249万</span>
                <Arrow up className="ml-[10px] text-[#222]" />
                <span className="ml-[22px] text-[#efc22c]">MA1:-1662万</span>
                <Arrow className="ml-[13px] text-[#efc22c]" />
                <span className="ml-[21px] text-[#c832c8]">MA2:-896万</span>
                <Arrow className="ml-[12px] text-[#c832c8]" />
            </div>
            <FlowChart />

            {/* boll */}
            <div className="h-[63px] shrink-0 flex items-center text-[39px] leading-none">
                <Selector label="BOLL" className="w-[133px]" />
                <span className="ml-[4px] text-[#222]">MID:27.28</span>
                <Arrow className="ml-[11px] text-[#222]" />
                <span className="ml-[21px] text-[#efc22c]">UP:29.16</span>
                <Arrow className="ml-[10px] text-[#efc22c]" />
                <span className="ml-[21px] text-[#c832c8]">LOW:25.40</span>
                <Arrow up className="ml-[10px] text-[#c832c8]" />
            </div>
            <BollChart />
            <TimeAxis />

            {/* promo pill, its lower edge runs under the footer */}
            <div className="mt-[18px] h-[88px] shrink-0 overflow-hidden px-[18px]">
                <div className="h-[92px] rounded-[46px] bg-[#fdeee6] flex items-center pl-[29px]">
                    <svg width="47" height="40" viewBox="0 -1 47 40" className="shrink-0">
                        <path d="M9.7 11.3 L42.3 2 V-1 H45.7 V38 H42.3 V35.7 L24.7 33 L24 31 L16.3 29.7 L15.3 26.3 L9.7 24.7 Z" fill="#e8590c" />
                        <rect x="1.3" y="11.3" width="4.4" height="15" fill="#e8590c" />
                    </svg>
                    <span className="ml-[17px] text-[30px] leading-none text-[#f7d6c4]">¦</span>
                    <span className="ml-[6px] text-[34px] leading-none text-[#f0c3ad]">!</span>
                    <span className="ml-[26px] text-[39.5px] leading-none text-[#d9591a] whitespace-nowrap">交易日14:30助你筛选潜力股，立即查看&gt;&gt;</span>
                    <span className="ml-auto w-px h-[35px] bg-[#d9591a]" />
                    <svg width="32" height="32" viewBox="0 0 32 32" className="ml-[17px] mr-[36px] shrink-0" fill="none" stroke="#d9591a" strokeWidth="2.8">
                        <path d="M2 1 L30 31 M30 1 L2 31" />
                    </svg>
                </div>
            </div>

            <Footer />
        </div>
    );
};

export default App;
